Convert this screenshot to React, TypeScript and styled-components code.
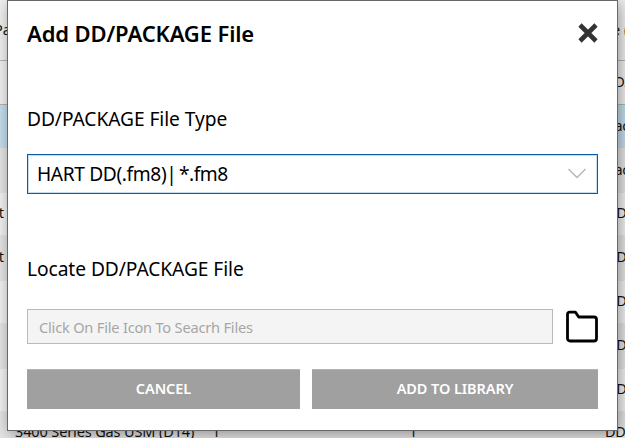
import React from "react";
import styled, { createGlobalStyle } from "styled-components";

const GlobalStyle = createGlobalStyle`
  * { box-sizing: border-box; }
  body { margin: 0; overflow: hidden; }
`;

const Page = styled.div`
  position: relative;
  width: 625px;
  height: 438px;
  overflow: hidden;
  background: #f0f0f0;
  color: #111;
  font-family: "Noto Sans", "Open Sans", sans-serif;
`;

const Row = styled.div<{ $height: number; $bg: string; $line?: boolean; $lift?: number }>`
  display: grid;
  grid-template-columns: 212px 197px 197px 60px;
  width: 666px;
  height: ${(p) => p.$height}px;
  padding-bottom: ${(p) => p.$lift ?? 3}px;
  align-items: center;
  background: ${(p) => p.$bg};
  border-bottom: ${(p) => (p.$line ? "1px solid #b4b4b4" : "none")};
  font-size: 14.5px;
  line-height: 20px;
  white-space: nowrap;
`;

const Cell = styled.span<{ $indent?: number; $spacing?: number }>`
  margin-left: ${(p) => p.$indent ?? 0}px;
  letter-spacing: ${(p) => p.$spacing ?? 0}px;
`;

const EdgeCell = styled(Cell)`
  width: 4px;
  direction: rtl;
`;

const Dialog = styled.section`
  position: absolute;
  left: 7px;
  top: 0;
  width: 611px;
  height: 431px;
  padding: 16px 19px 0;
  display: flex;
  flex-direction: column;
  background: #fff;
  border: 1px solid #686868;
  box-shadow: 2px 3px 14px rgba(0, 0, 0, 0.38);
  color: #000;
`;

const Header = styled.header`
  display: flex;
  justify-content: space-between;
  height: 33px;
`;

const Title = styled.h1`
  margin: 0;
  font-size: 22px;
  line-height: 32px;
  font-weight: 600;
  letter-spacing: -0.13px;
  white-space: nowrap;
`;

const IconButton = styled.button`
  display: flex;
  padding: 0;
  border: 0;
  background: none;
`;

const Label = styled.label<{ $top: number }>`
  height: 28px;
  margin-top: ${(p) => p.$top}px;
  font-size: 19.2px;
  line-height: 28px;
  letter-spacing: -0.07px;
  white-space: nowrap;
`;

const Select = styled.div`
  display: flex;
  align-items: center;
  justify-content: space-between;
  height: 40px;
  margin-top: 21px;
  padding: 0 10px 2px 9px;
  border: 1px solid #0a5ca8;
  box-shadow: inset 0 0 0 1px #c3dcf0;
  font-size: 19.2px;
  letter-spacing: -0.38px;
  white-space: pre;
`;

const Pattern = styled.span`
  margin-left: -2px;
  letter-spacing: -0.5px;
`;

const FileRow = styled.div`
  display: flex;
  height: 35px;
  margin-top: 26px;
  gap: 12px;
`;

const FileField = styled.div`
  width: 526px;
  padding-left: 11px;
  border: 1px solid #bababa;
  background: #f4f4f4;
  color: #a6a6a6;
  font-size: 14.6px;
  line-height: 34px;
  letter-spacing: -0.2px;
`;

const Actions = styled.div`
  display: grid;
  grid-template-columns: 273px 286px;
  gap: 12px;
  height: 40px;
  margin-top: 25px;
`;

const Action = styled.button`
  padding: 0 0 3px;
  border: 0;
  border-top: 1px solid #b2b2b2;
  background: #a0a0a0;
  color: #fff;
  font-family: inherit;
  font-size: 14.5px;
  font-weight: 600;
  letter-spacing: -0.08px;
`;

const rows = [
  { height: 44, bg: "#f0f0f0", edge: "", type: "DD/PACKAGE", line: true, indent: -2 },
  { height: 43, bg: "#c5ddec", edge: "", type: "Package" },
  { height: 45, bg: "#e5e5e5", edge: "", type: "Package" },
  { height: 42, bg: "#f2f2f2", edge: "t", type: "DD", lift: 5 },
  { height: 46, bg: "#e5e5e5", edge: "t", type: "DD", lift: 5 },
  { height: 42, bg: "#f2f2f2", edge: "", type: "DD", lift: 5 },
  { height: 46, bg: "#e5e5e5", edge: "", type: "DD", lift: 5 },
  { height: 42, bg: "#f2f2f2", edge: "", type: "DD", lift: 5 },
];

export default function App() {
  return (
    <>
      <GlobalStyle />
      <Page>
        <Row $height={61} $bg="#f0f0f0" $line>
          <Cell $indent={-6}>Pa</Cell>
          <Cell />
          <Cell />
          <Cell $indent={6}>e (</Cell>
        </Row>
        {rows.map((row, i) => (
          <Row key={i} $height={row.height} $bg={row.bg} $line={row.line} $lift={row.lift}>
            <EdgeCell>{row.edge}</EdgeCell>
            <Cell />
            <Cell />
            <Cell $indent={row.indent} $spacing={-0.3}>{row.type}</Cell>
          </Row>
        ))}
        <Row $height={44} $bg="#e5e5e5" $lift={5}>
          <Cell $indent={15} $spacing={-0.13}>3400 Series Gas USM (D14)</Cell>
          <Cell>1</Cell>
          <Cell>1</Cell>
          <Cell $spacing={-0.3} $indent={-1}>DD</Cell>
        </Row>
        <Dialog role="dialog" aria-label="Add DD/PACKAGE File">
          <Header>
            <Title>Add DD/PACKAGE File</Title>
            <IconButton aria-label="Close">
              <svg width="20" height="33" viewBox="0 0 20 33" fill="none" stroke="#333" strokeWidth="4.6">
                <path d="M2 8 18 24M18 8 2 24" />
              </svg>
            </IconButton>
          </Header>
          <Label $top={55}>DD/PACKAGE File Type</Label>
          <Select>
            <span>
              HART DD(.fm8)|<Pattern> *.fm8</Pattern>
            </span>
            <svg width="20" height="12" viewBox="0 0 20 12" fill="none" stroke="#b5b5b5" strokeWidth="1.3">
              <path d="M1.5 2 10 10.5 18.5 2" />
            </svg>
          </Select>
          <Label $top={61}>Locate DD/PACKAGE File</Label>
          <FileRow>
            <FileField>Click On File Icon To Seacrh Files</FileField>
            <IconButton aria-label="Choose file">
              <svg width="33" height="35" viewBox="0 0 33 35" fill="none" stroke="#000" strokeWidth="2.8" strokeLinejoin="round">
                <path d="M4.5 3.2H10.5L13.7 8H29A2.5 2.5 0 0 1 31.5 10.5V29.5A2.5 2.5 0 0 1 29 32H5A2.5 2.5 0 0 1 2.5 29.5V5.2A2 2 0 0 1 4.5 3.2Z" />
              </svg>
            </IconButton>
          </FileRow>
          <Actions>
            <Action>CANCEL</Action>
            <Action>ADD TO LIBRARY</Action>
          </Actions>
        </Dialog>
      </Page>
    </>
  );
}
